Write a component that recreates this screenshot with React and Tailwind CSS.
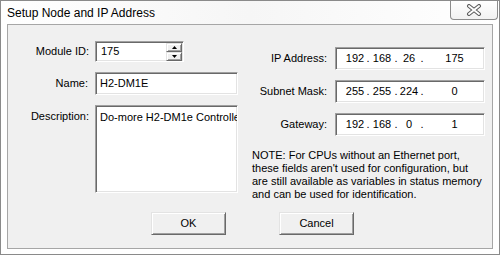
import React from "react";

const font = { fontFamily: '"Liberation Sans", Arial, sans-serif' };

function Sunken({ className = "", children }) {
  return (
    <div
      className={
        "bg-white border border-t-[#a0a0a0] border-l-[#a0a0a0] border-r-white border-b-white shadow-[inset_1px_1px_0_#696969,inset_-1px_-1px_0_#e3e3e3] " +
        className
      }
    >
      {children}
    </div>
  );
}

function Button({ children }) {
  return (
    <div className="w-[75px] h-[23px] flex items-center justify-center bg-[#f0f0f0] border border-t-[#e3e3e3] border-l-[#e3e3e3] border-r-[#696969] border-b-[#696969] shadow-[inset_1px_1px_0_#ffffff,inset_-1px_-1px_0_#a0a0a0] text-[11px] text-black">
      {children}
    </div>
  );
}

function SpinBtn({ up }) {
  return (
    <div className="w-[16px] h-[9px] flex items-center justify-center bg-[#f0f0f0] border border-t-[#e3e3e3] border-l-[#e3e3e3] border-r-[#696969] border-b-[#696969] shadow-[inset_1px_1px_0_#ffffff,inset_-1px_-1px_0_#a0a0a0]">
      <svg width="5" height="3" viewBox="0 0 5 3">
        {up ? (
          <path d="M2.5 0 L5 3 L0 3 Z" fill="#000" />
        ) : (
          <path d="M0 0 L5 0 L2.5 3 Z" fill="#000" />
        )}
      </svg>
    </div>
  );
}

function IpBox({ parts }) {
  return (
    <Sunken className="w-[150px] h-[23px] flex items-center text-[11px] text-black">
      <div className="flex items-center pl-[9px] w-full whitespace-nowrap">
        <span className="w-[20px] text-center">{parts[0]}</span>
        <span className="w-[6px] text-center">.</span>
        <span className="w-[22px] text-center">{parts[1]}</span>
        <span className="w-[6px] text-center">.</span>
        <span className="w-[20px] text-center">{parts[2]}</span>
        <span className="w-[6px] text-center">.</span>
        <span className="flex-1 text-center">{parts[3]}</span>
      </div>
    </Sunken>
  );
}

export default function App() {
  return (
    <div
      style={font}
      className="w-[500px] h-[255px] bg-white border border-[#8a8a8a] relative flex flex-col text-black"
    >
      {/* Title bar */}
      <div className="h-[23px] flex items-center pl-[6px] bg-gradient-to-r from-[#ffffff] via-[#f6f6f6] to-[#ffffff]">
        <span className="text-[12px] text-black">Setup Node and IP Address</span>
      </div>
      <div className="absolute top-0 right-[1px] w-[48px] h-[19px] border border-t-0 border-[#8c8c8c] rounded-b-[4px] bg-gradient-to-b from-white to-[#f2f2f2] flex items-center justify-center">
        <svg width="16" height="12" viewBox="0 0 16 12">
          <path d="M3 2 L13 10 M13 2 L3 10" stroke="#5a5a5a" strokeWidth="4" strokeLinecap="round" />
          <path d="M3 2 L13 10 M13 2 L3 10" stroke="#ffffff" strokeWidth="2" strokeLinecap="round" />
        </svg>
      </div>

      {/* Client area */}
      <div className="mx-[6px] mb-[5px] flex-1 bg-[#f0f0f0] border border-[#a6a6a6] flex flex-col">
        <div className="h-[187px] flex">
          {/* Left column */}
          <div className="w-[244px] pt-[16px] flex flex-col gap-[10px] text-[11px]">
            <div className="flex items-center">
              <div className="w-[82px] text-right pr-[1px]">Module ID:</div>
              <Sunken className="ml-[5px] w-[89px] h-[21px] flex items-center justify-between">
                <span className="pl-[5px]">175</span>
                <div className="flex flex-col pr-[1px]">
                  <SpinBtn up />
                  <SpinBtn />
                </div>
              </Sunken>
            </div>
            <div className="flex items-center">
              <div className="w-[82px] text-right pr-[2px]">Name:</div>
              <Sunken className="ml-[5px] w-[143px] h-[23px] flex items-center">
                <span className="pl-[4px]">H2-DM1E</span>
              </Sunken>
            </div>
            <div className="flex items-start">
              <div className="w-[82px] text-right pr-[1px] pt-[3px]">Description:</div>
              <Sunken className="ml-[5px] w-[143px] h-[88px] overflow-hidden">
                <div className="pl-[4px] pt-[3px] whitespace-nowrap">Do-more H2-DM1e Controller</div>
              </Sunken>
            </div>
          </div>
          {/* Right column */}
          <div className="flex-1 pt-[22px] text-[11px]">
            <div className="flex flex-col gap-[10px]">
              <div className="flex items-center">
                <div className="w-[75px] text-right">IP Address:</div>
                <div className="ml-[8px]"><IpBox parts={["192", "168", "26", "175"]} /></div>
              </div>
              <div className="flex items-center">
                <div className="w-[75px] text-right">Subnet Mask:</div>
                <div className="ml-[8px]"><IpBox parts={["255", "255", "224", "0"]} /></div>
              </div>
              <div className="flex items-center">
                <div className="w-[75px] text-right">Gateway:</div>
                <div className="ml-[8px]"><IpBox parts={["192", "168", "0", "1"]} /></div>
              </div>
            </div>
            <p className="mt-[13px] leading-[13px] w-[231px]">
              NOTE: For CPUs without an Ethernet port, these fields aren't used for configuration, but are still available as variables in status memory and can be used for identification.
            </p>
          </div>
        </div>
        <div className="flex pl-[143px] gap-[53px]">
          <Button>OK</Button>
          <Button>Cancel</Button>
        </div>
      </div>
    </div>
  );
}
